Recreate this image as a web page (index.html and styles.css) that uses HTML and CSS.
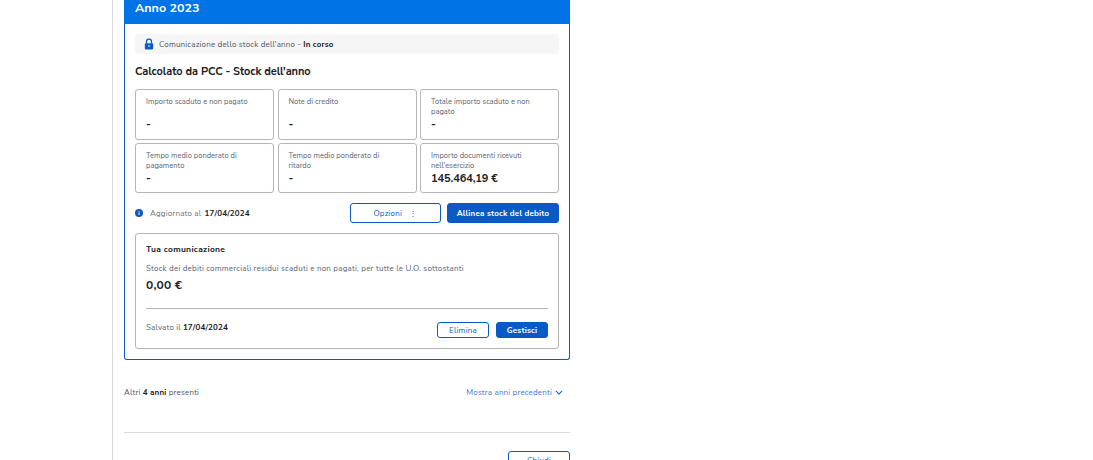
FILE: index.html
```html
<!DOCTYPE html>
<html lang="it">
<head>
<meta charset="utf-8">
<title>Anno 2023</title>
<link rel="stylesheet" href="styles.css">
</head>
<body>
<main class="panel">
  <section class="card">
    <header class="card-head">Anno 2023</header>
    <div class="card-body">
      <div class="notice">
        <svg class="lock" viewBox="0 0 12 14" width="10" height="12"><path d="M3 6V4a3 3 0 0 1 6 0v2" fill="none" stroke="#0a5ac5" stroke-width="1.5"/><rect x="1" y="6" width="10" height="7.5" rx="1" fill="#0a5ac5"/><circle cx="6" cy="9.5" r="1" fill="#fff"/></svg>
        <span>Comunicazione dello stock dell'anno - <b>In corso</b></span>
      </div>
      <h2 class="title">Calcolato da PCC - Stock dell'anno</h2>
      <div class="tiles">
        <div class="tile"><div class="label">Importo scaduto e non pagato</div><div class="dash">-</div></div>
        <div class="tile"><div class="label">Note di credito</div><div class="dash">-</div></div>
        <div class="tile"><div class="label">Totale importo scaduto e non pagato</div><div class="dash">-</div></div>
        <div class="tile"><div class="label">Tempo medio ponderato di pagamento</div><div class="dash">-</div></div>
        <div class="tile"><div class="label">Tempo medio ponderato di ritardo</div><div class="dash">-</div></div>
        <div class="tile"><div class="label">Importo documenti ricevuti nell'esercizio</div><div class="amount">145.464,19 €</div></div>
      </div>
      <div class="status">
        <svg class="info" viewBox="0 0 8 8" width="8" height="8"><circle cx="4" cy="4" r="4" fill="#0a5ac5"/><rect x="3.6" y="3.4" width="0.9" height="2.6" fill="#fff"/><rect x="3.6" y="2" width="0.9" height="0.9" fill="#fff"/></svg>
        <span class="updated">Aggiornato al <b>17/04/2024</b></span>
        <button class="btn btn-outline btn-options">Opzioni <span class="dots">⋮</span></button>
        <button class="btn btn-solid btn-align">Allinea stock del debito</button>
      </div>
      <div class="yours">
        <h3 class="yours-title">Tua comunicazione</h3>
        <p class="yours-text">Stock dei debiti commerciali residui scaduti e non pagati, per tutte le U.O. sottostanti</p>
        <div class="yours-value">0,00 €</div>
        <div class="yours-foot">
          <span class="saved">Salvato il <b>17/04/2024</b></span>
          <button class="btn btn-outline btn-small">Elimina</button>
          <button class="btn btn-solid btn-small">Gestisci</button>
        </div>
      </div>
    </div>
  </section>
  <div class="more">
    <span>Altri <b>4 anni</b> presenti</span>
    <a class="more-link">Mostra anni precedenti
      <svg viewBox="0 0 10 6" width="8" height="5"><path d="M1 1l4 4 4-4" fill="none" stroke="#0a5ac5" stroke-width="1.3"/></svg>
    </a>
  </div>
  <div class="actions">
    <button class="btn btn-outline btn-close">Chiudi</button>
  </div>
</main>
</body>
</html>
```
FILE: styles.css
```css
* { box-sizing: border-box; }
html, body { margin: 0; height: 460px; overflow: hidden; background: #fff; }
body { font-family: "Nunito Sans", Lato, "Noto Sans", sans-serif; color: #1c2024; }
b { font-weight: 700; }
.panel { margin-left: 112px; width: 458px; height: 460px; padding-left: 11px; border-left: 1px solid #d9d9d9; overflow: hidden; }
.card { width: 446px; height: 360px; border: 1px solid #0a5ac5; border-top: 0; border-radius: 0 0 3px 3px; }
.card-head { height: 24px; margin: 0 -1px; padding: 0 0 0 11px; background: #0073e6; color: #fff; font-size: 12.5px; font-weight: 700; line-height: 16px; }
.card-body { padding: 10px 10px 0; }
.notice { display: flex; align-items: center; gap: 5px; height: 20px; padding-left: 9px; background: #f6f6f6; border-radius: 3px; font-size: 8px; letter-spacing: 0.18px; color: #4c5560; }
.notice b { color: #1c2024; }
.title { margin: 11px 0 0; height: 14px; font-size: 11px; line-height: 14px; font-weight: 700; letter-spacing: -0.06px; color: #1c2024; }
.tiles { margin-top: 10px; display: grid; grid-template-columns: 139px 139px 139px; justify-content: space-between; grid-template-rows: 51px 50px; row-gap: 3px; }
.tile { border: 1px solid #b5b5b5; border-radius: 3px; padding: 7px 14px 0 10px; }
.label { font-size: 7.5px; line-height: 10px; letter-spacing: 0.03px; color: #5b6570; height: 20px; }
.dash { font-size: 11px; font-weight: 700; line-height: 12px; margin-top: 2px; }
.amount { font-size: 11px; font-weight: 700; line-height: 14px; letter-spacing: -0.1px; margin-top: 1px; }
.status { display: flex; align-items: center; height: 20px; margin-top: 10px; }
.info { flex: none; }
.updated { margin-left: 7px; font-size: 8px; letter-spacing: 0.18px; color: #6b747d; }
.updated b { margin-left: 1px; color: #1c2024; }
.btn { font-family: inherit; border-radius: 3px; font-size: 8px; letter-spacing: 0.2px; padding: 0; }
.btn-outline { background: #fff; border: 1px solid #0a5ac5; color: #0a5ac5; font-weight: 400; }
.btn-solid { background: #0a5ac5; border: 1px solid #0a5ac5; color: #fff; font-weight: 700; }
.btn-options { margin-left: auto; width: 91px; height: 20px; }
.dots { margin-left: 5px; }
.btn-align { margin-left: 6px; width: 112px; height: 20px; }
.yours { height: 116px; margin-top: 10px; padding: 10px; border: 1px solid #b5b5b5; border-radius: 3px; }
.yours-title { margin: 0; font-size: 8.5px; line-height: 11px; font-weight: 700; letter-spacing: 0.3px; }
.yours-text { margin: 8px 0 0; font-size: 8px; line-height: 11px; letter-spacing: 0.2px; color: #5b6570; }
.yours-value { margin-top: 3px; font-size: 12px; line-height: 16px; font-weight: 700; letter-spacing: 0.2px; }
.yours-foot { margin-top: 15px; padding-top: 13px; border-top: 1px solid #b5b5b5; display: flex; align-items: flex-start; gap: 7px; }
.saved { margin-right: auto; font-size: 8px; line-height: 11px; letter-spacing: 0.15px; color: #5b6570; }
.saved b { color: #1c2024; }
.btn-small { width: 52px; height: 16px; }
.more { width: 446px; display: flex; justify-content: space-between; align-items: center; height: 11px; margin-top: 27px; padding-right: 7px; font-size: 8px; letter-spacing: 0.17px; color: #4c5560; }
.more b { color: #1c2024; }
.more-link { display: flex; align-items: center; gap: 3px; color: #3a7bd5; }
.actions { width: 446px; margin-top: 34px; padding-top: 18px; border-top: 1px solid #d9d9d9; display: flex; justify-content: flex-end; }
.btn-close { width: 62px; height: 20px; padding-bottom: 2px; flex: none; }
```
